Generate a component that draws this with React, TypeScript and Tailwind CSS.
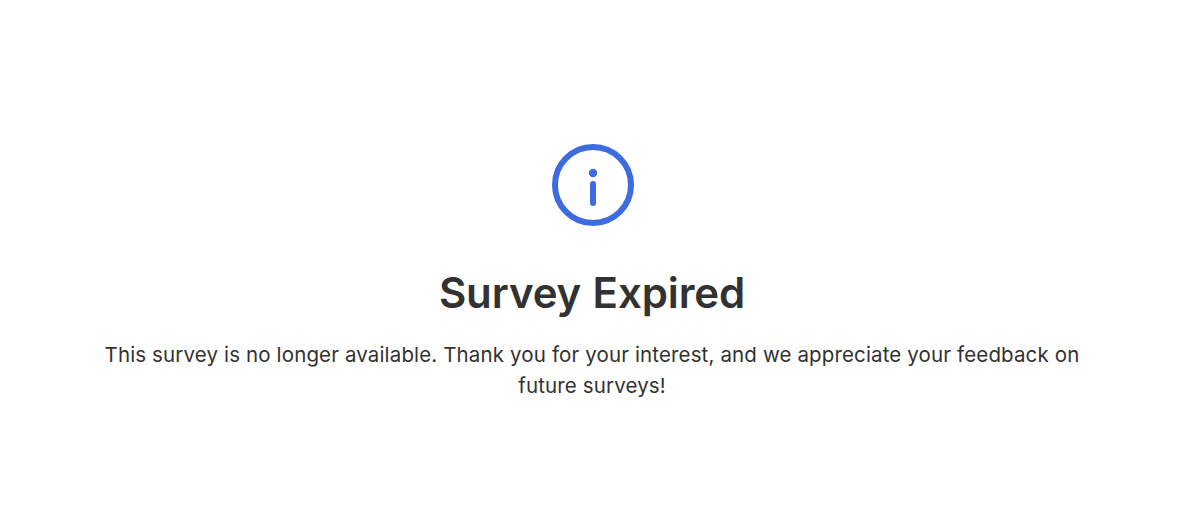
export default function App() {
  return (
    <main className="flex h-[511px] w-[1184px] flex-col items-center bg-white pt-[144px] font-['Inter',sans-serif] text-[#323232]">
      <svg className="ml-[2px] size-[82px] shrink-0" viewBox="0 0 82 82" fill="none" aria-hidden="true">
        <circle cx="41" cy="41" r="38" stroke="#3d6be0" strokeWidth="6" />
        <circle cx="41" cy="29" r="4.2" fill="#3d6be0" />
        <path d="M41 40v19" stroke="#3d6be0" strokeWidth="6" strokeLinecap="round" />
      </svg>
      <h1 className="mt-[37px] whitespace-nowrap text-[42px] leading-[60px] font-semibold tracking-[-0.12px] [word-spacing:1px]">Survey Expired</h1>
      <p className="mt-[16px] whitespace-nowrap text-center text-[20.5px] leading-[31px] tracking-[0.14px]">
        This survey is no longer available. Thank you for your interest, and we appreciate your feedback on
        <br />
        future surveys!
      </p>
    </main>
  );
}
